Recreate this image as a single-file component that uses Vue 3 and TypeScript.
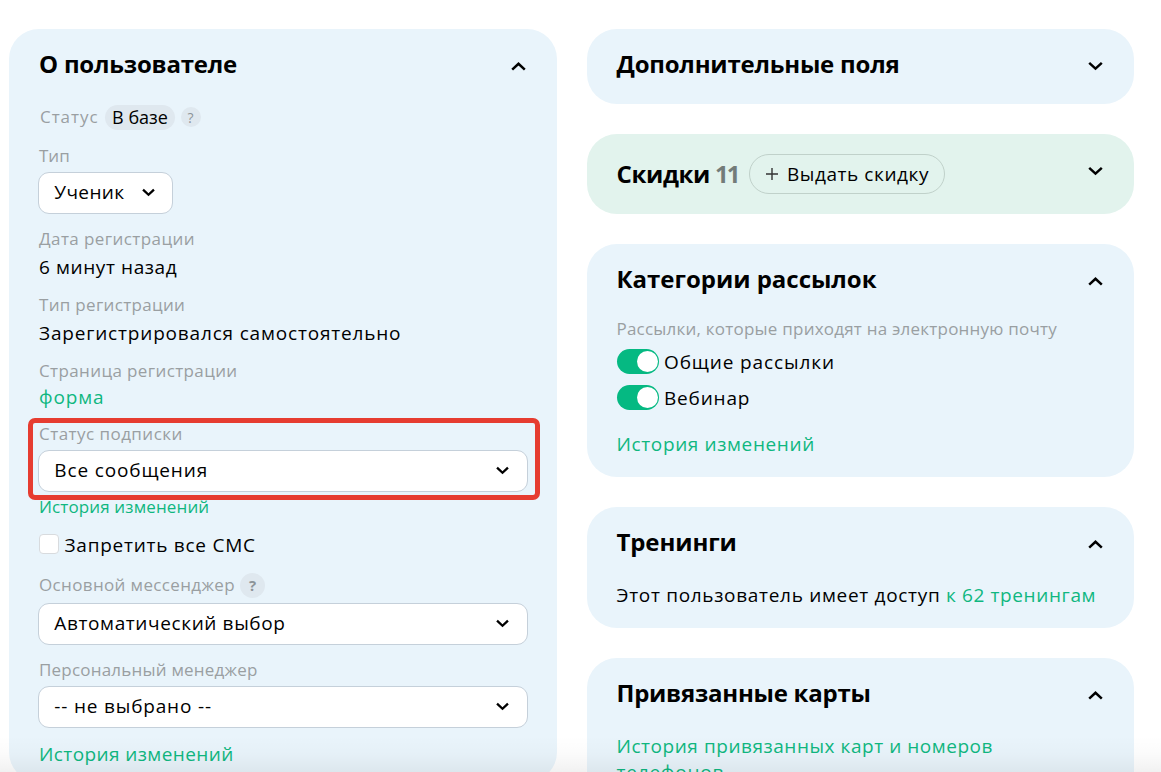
<script setup lang="ts">
import { reactive, ref } from 'vue'

const chevronUp = 'M1.2 7.6 7.5 1.8 13.8 7.6'
const chevronDown = 'M1.2 1.8 7.5 7.6 13.8 1.8'

const smsBlocked = ref(false)
const mailings = reactive([
  { name: 'Общие рассылки', track: 't-common', on: true },
  { name: 'Вебинар', track: 't-webinar', on: true },
])
</script>

<template>
  <main class="page">
    <section class="card user">
      <header class="head">
        <h2 class="t-user">О пользователе</h2>
        <svg class="chev up" viewBox="0 0 15 10"><path :d="chevronUp" /></svg>
      </header>

      <div class="status">
        <span class="label t-status">Статус</span>
        <span class="badge">В базе</span>
        <span class="hint small">?</span>
      </div>

      <div class="label m14">Тип</div>
      <div class="select short m5">
        <span class="t-pupil">Ученик</span>
        <svg class="arrow" viewBox="0 0 15 10"><path :d="chevronDown" /></svg>
      </div>

      <div class="label m13 t-date">Дата регистрации</div>
      <div class="value m4 t-minutes">6 минут назад</div>

      <div class="label m13 t-type">Тип регистрации</div>
      <div class="value m4 t-self">Зарегистрировался самостоятельно</div>

      <div class="label m13 t-page">Страница регистрации</div>
      <a class="link m2 t-form">форма</a>

      <div class="subscription">
        <div class="label t-sub">Статус подписки</div>
        <div class="select m5">
          <span class="t-all">Все сообщения</span>
          <svg class="arrow" viewBox="0 0 15 10"><path :d="chevronDown" /></svg>
        </div>
        <div class="frame"></div>
      </div>
      <a class="link compact m3">История изменений</a>

      <div class="check" @click="smsBlocked = !smsBlocked">
        <span class="box" :class="{ checked: smsBlocked }"></span>
        <span class="t-sms">Запретить все СМС</span>
      </div>

      <div class="messenger">
        <span class="label t-mess">Основной мессенджер</span>
        <span class="hint">?</span>
      </div>
      <div class="select m5">
        <span class="t-auto">Автоматический выбор</span>
        <svg class="arrow" viewBox="0 0 15 10"><path :d="chevronDown" /></svg>
      </div>

      <div class="label m13 t-manager">Персональный менеджер</div>
      <div class="select m5">
        <span class="t-none">-- не выбрано --</span>
        <svg class="arrow" viewBox="0 0 15 10"><path :d="chevronDown" /></svg>
      </div>
      <a class="link m13 t-hist">История изменений</a>
    </section>

    <div class="column">
      <section class="card extra">
        <header class="head">
          <h2 class="t-extra">Дополнительные поля</h2>
          <svg class="chev" viewBox="0 0 15 10"><path :d="chevronDown" /></svg>
        </header>
      </section>

      <section class="card discounts">
        <h2 class="t-disc">Скидки</h2>
        <span class="count">11</span>
        <button class="give" type="button">
          <svg class="plus" viewBox="0 0 12 12"><path d="M6 0v12M0 6h12" /></svg>
          <span>Выдать скидку</span>
        </button>
        <svg class="chev" viewBox="0 0 15 10"><path :d="chevronDown" /></svg>
      </section>

      <section class="card mail">
        <header class="head">
          <h2 class="t-cat">Категории рассылок</h2>
          <svg class="chev up" viewBox="0 0 15 10"><path :d="chevronUp" /></svg>
        </header>
        <div class="label mail-note">Рассылки, которые приходят на электронную почту</div>
        <div class="toggles">
          <div v-for="m in mailings" :key="m.name" class="toggle-row" @click="m.on = !m.on">
            <span class="toggle" :class="{ off: !m.on }"></span>
            <span :class="m.track">{{ m.name }}</span>
          </div>
        </div>
        <a class="link m20 t-hist-mail">История изменений</a>
      </section>

      <section class="card trainings">
        <header class="head">
          <h2 class="t-train">Тренинги</h2>
          <svg class="chev up" viewBox="0 0 15 10"><path :d="chevronUp" /></svg>
        </header>
        <div class="value m24"><span class="t-access">Этот пользователь имеет доступ </span><a class="green">к 62 тренингам</a></div>
      </section>

      <section class="card cards">
        <header class="head">
          <h2 class="t-cards">Привязанные карты</h2>
          <svg class="chev up" viewBox="0 0 15 10"><path :d="chevronUp" /></svg>
        </header>
        <a class="link m24 t-bound">История привязанных карт и номеров<br /><span class="t-phones">телефонов</span></a>
      </section>
    </div>

    <div class="fade"></div>
  </main>
</template>

<style>
body {
  background: #fff;
  overflow: hidden;
}
</style>

<style scoped>
.page {
  position: relative;
  box-sizing: border-box;
  display: flex;
  align-items: flex-start;
  gap: 30px;
  width: 1161px;
  height: 772px;
  padding: 29px 27px 0 9px;
  overflow: hidden;
  font-family: 'Open Sans', 'Noto Sans', sans-serif;
  font-size: 19px;
  line-height: 26px;
  color: #000;
  white-space: nowrap;
}
.card {
  box-sizing: border-box;
  padding: 18px 29px 0 29.5px;
  border-radius: 30px;
  background: #e9f4fb;
}
.user {
  flex: none;
  width: 548px;
  height: 753px;
  padding: 18px 30px 0;
}
.column {
  flex: none;
  display: flex;
  flex-direction: column;
  gap: 30px;
  width: 547px;
}
.extra { height: 75px; }
.mail { height: 233px; }
.trainings { height: 121px; }
.cards { height: 180px; }

.head {
  display: flex;
  justify-content: space-between;
}
h2 {
  margin: 0;
  font-size: 24px;
  line-height: 33px;
  font-weight: 700;
}
.chev {
  flex: none;
  width: 15px;
  height: 10px;
  margin: 13.5px 2.3px 0 0;
}
.chev.up { margin-top: 14.5px; }
.user .chev { margin-right: 1px; }
svg {
  display: block;
  overflow: visible;
}
path {
  fill: none;
  stroke: #000;
  stroke-width: 2.5;
}

.label {
  font-size: 17px;
  line-height: 23px;
  color: #9a9fa2;
}
.link {
  display: block;
  color: #0fb780;
}
.green {
  color: #0fb780;
  letter-spacing: 0.62px;
}
.compact {
  font-size: 17px;
  line-height: 23px;
  letter-spacing: 0.13px;
}

.status {
  display: flex;
  align-items: flex-start;
  height: 25px;
  margin-top: 25px;
}
.status .label { margin-left: 1px; }
.badge {
  box-sizing: border-box;
  width: 70px;
  height: 25px;
  margin-left: 6.5px;
  border-radius: 13px;
  background: #dfe8ef;
  font-size: 18px;
  line-height: 24px;
  text-align: center;
}
.hint {
  width: 25px;
  height: 25px;
  margin-left: 5px;
  border-radius: 50%;
  background: #dfe8ef;
  color: #8d9499;
  font-size: 15px;
  font-weight: 700;
  line-height: 25px;
  text-align: center;
}
.hint.small {
  width: 20px;
  height: 20px;
  margin: 2px 0 0 5.5px;
  font-size: 14px;
  font-weight: 400;
  line-height: 21px;
}

.select {
  box-sizing: border-box;
  display: flex;
  justify-content: space-between;
  width: 490px;
  height: 42px;
  margin-left: -1px;
  padding: 6px 17.7px 0 15.3px;
  border: 1px solid #c5d0da;
  border-radius: 11px;
  background: #fff;
}
.select.short {
  width: 135px;
  padding-right: 17.5px;
}
.arrow {
  width: 13px;
  height: 9px;
  margin-top: 8.5px;
}
.arrow path { stroke-width: 2.7; }

.subscription {
  position: relative;
  margin-top: 12px;
}
.frame {
  position: absolute;
  left: -11px;
  top: -4px;
  box-sizing: border-box;
  width: 512px;
  height: 82px;
  border: 5px solid #e63c30;
  border-radius: 7px;
}

.check {
  display: flex;
  gap: 5.5px;
  margin-top: 14px;
}
.box {
  box-sizing: border-box;
  width: 20px;
  height: 20px;
  margin-top: 2px;
  border: 1px solid #d8dbde;
  border-radius: 4px;
  background: #fff;
}
.box.checked { background: #00b982; }
.messenger {
  display: flex;
  height: 25px;
  margin-top: 15px;
}

.discounts {
  display: flex;
  height: 80px;
  background: #e2f3ed;
  padding-top: 20px;
}
.discounts h2,
.count { margin-top: 3px; }
.count {
  flex: none;
  width: 34px;
  margin-left: 5px;
  color: #737c79;
  font-size: 24px;
  line-height: 33px;
  font-weight: 700;
  letter-spacing: -1.8px;
}
.give {
  box-sizing: border-box;
  flex: none;
  display: flex;
  width: 196px;
  height: 40px;
  padding: 6px 0 0 16px;
  border: 1px solid #c0d1ca;
  border-radius: 20px;
  background: transparent;
  font: inherit;
  color: #000;
  letter-spacing: 0.57px;
}
.plus {
  width: 12px;
  height: 12px;
  margin: 7px 9px 0 0;
}
.plus path {
  stroke: #333;
  stroke-width: 1.4;
}
.discounts .chev {
  margin-top: 12px;
  margin-left: auto;
}

.mail-note {
  margin-top: 22px;
  letter-spacing: 0.22px;
}
.toggles {
  display: flex;
  flex-direction: column;
  gap: 10px;
  margin-top: 9px;
}
.toggle-row {
  display: flex;
  gap: 5px;
}
.toggle {
  box-sizing: border-box;
  width: 42px;
  height: 25px;
  margin-left: 0.5px;
  padding: 2px 2px 2px 19.5px;
  border-radius: 13px;
  background: #05b982;
}
.toggle::before {
  content: '';
  display: block;
  width: 21px;
  height: 21px;
  border-radius: 50%;
  background: #fff;
}
.toggle.off {
  padding-left: 2px;
  background: #b9c3ca;
}

.fade {
  position: absolute;
  left: 0;
  right: 0;
  bottom: 0;
  height: 36px;
  background: linear-gradient(rgba(0, 0, 0, 0), rgba(0, 0, 0, 0.015) 50%, rgba(0, 0, 0, 0.055));
  pointer-events: none;
}

.m2 { margin-top: 2px; }
.m3 { margin-top: 3px; }
.m4 { margin-top: 4px; }
.m5 { margin-top: 5px; }
.m13 { margin-top: 13px; }
.m14 { margin-top: 14px; }
.m20 { margin-top: 20px; }
.m24 { margin-top: 24px; }

.t-user { letter-spacing: -0.21px; }
.t-extra { letter-spacing: -0.21px; }
.t-disc { letter-spacing: -0.35px; }
.t-cat { letter-spacing: -0.02px; }
.t-train { letter-spacing: -0.11px; }
.t-cards { letter-spacing: -0.25px; }
.t-status { letter-spacing: 0.95px; }
.t-date { letter-spacing: 0.42px; }
.t-type { letter-spacing: 0.31px; }
.t-page { letter-spacing: 0.38px; }
.t-sub { letter-spacing: 0.46px; }
.t-mess { letter-spacing: 0.36px; }
.t-manager { letter-spacing: 0.21px; }
.t-pupil { letter-spacing: 0.39px; }
.t-minutes { letter-spacing: 0.6px; }
.t-self { letter-spacing: 0.82px; }
.t-form { letter-spacing: 0.85px; }
.t-all { letter-spacing: 0.86px; }
.t-sms { letter-spacing: 0.75px; }
.t-auto { letter-spacing: 0.62px; }
.t-none { letter-spacing: 0.82px; }
.t-hist { letter-spacing: 0.4px; }
.t-common { letter-spacing: 0.88px; }
.t-webinar { letter-spacing: 0.82px; }
.t-hist-mail { letter-spacing: 0.62px; }
.t-access { letter-spacing: 0.69px; }
.t-bound { letter-spacing: 0.54px; }
.t-phones { letter-spacing: 0.8px; }
</style>
